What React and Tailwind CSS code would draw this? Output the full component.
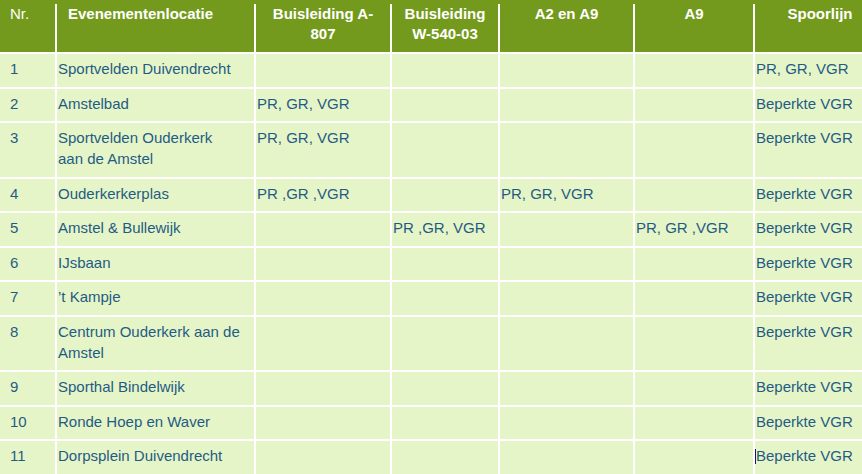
import React from "react";

const rows = [
  ["1", "Sportvelden Duivendrecht", "", "", "", "", "PR, GR, VGR"],
  ["2", "Amstelbad", "PR, GR, VGR", "", "", "", "Beperkte VGR"],
  ["3", ["Sportvelden Ouderkerk", "aan de Amstel"], "PR, GR, VGR", "", "", "", "Beperkte VGR"],
  ["4", "Ouderkerkerplas", "PR ,GR ,VGR", "", "PR, GR, VGR", "", "Beperkte VGR"],
  ["5", "Amstel & Bullewijk", "", "PR ,GR, VGR", "", "PR, GR ,VGR", "Beperkte VGR"],
  ["6", "IJsbaan", "", "", "", "", "Beperkte VGR"],
  ["7", "\u2019t Kampje", "", "", "", "", "Beperkte VGR"],
  ["8", ["Centrum Ouderkerk aan de", "Amstel"], "", "", "", "", "Beperkte VGR"],
  ["9", "Sporthal Bindelwijk", "", "", "", "", "Beperkte VGR"],
  ["10", "Ronde Hoep en Waver", "", "", "", "", "Beperkte VGR"],
  ["11", "Dorpsplein Duivendrecht", "", "", "", "", "Beperkte VGR"],
];

function Cell({ value, first, cursor }) {
  const content = Array.isArray(value) ? (
    <>
      {value[0]}
      <br />
      {value[1]}
    </>
  ) : (
    value
  );
  return (
    <div
      className={
        "bg-[#e6f5c7] text-[#1f5c85] pt-[4px] pb-[7.5px] leading-[21px] whitespace-nowrap " +
        (first ? "pl-[10px]" : "pl-[1px]")
      }
    >
      {cursor ? (
        <span className="relative">
          <span className="absolute left-[-1px] top-[2px] w-[1px] h-[15px] bg-[#1a1466]" />
          {content}
        </span>
      ) : (
        content
      )}
    </div>
  );
}

export default function App() {
  const cols = "grid grid-cols-[55px_197px_134px_106px_133px_118px_130px] gap-x-[2px] w-max";
  return (
    <div
      className="w-[862px] h-[474px] overflow-hidden bg-white text-[15px]"
      style={{ fontFamily: '"Liberation Sans", Arial, sans-serif' }}
    >
      <div className="bg-[#739a1c] pt-[4px]">
        <div className={cols + " bg-white"}>
          <div className="bg-[#739a1c] h-[48px] text-white leading-[20px] pl-[10px]">Nr.</div>
          <div className="bg-[#739a1c] h-[48px] text-white font-bold leading-[20px] pl-[11px]">
            Evenementenlocatie
          </div>
          <div className="bg-[#739a1c] h-[48px] text-white font-bold leading-[20px] text-center">
            Buisleiding A-
            <br />
            807
          </div>
          <div className="bg-[#739a1c] h-[48px] text-white font-bold leading-[20px] text-center">
            Buisleiding
            <br />
            W-540-03
          </div>
          <div className="bg-[#739a1c] h-[48px] text-white font-bold leading-[20px] text-center">
            A2 en A9
          </div>
          <div className="bg-[#739a1c] h-[48px] text-white font-bold leading-[20px] text-center">
            A9
          </div>
          <div className="bg-[#739a1c] h-[48px] text-white font-bold leading-[20px] text-center">
            Spoorlijn
          </div>
        </div>
      </div>
      <div className={cols + " gap-y-[2px] bg-white pt-[2px]"}>
        {rows.map((r, i) =>
          r.map((v, j) => (
            <Cell key={i + "-" + j} value={v} first={j === 0} cursor={i === 10 && j === 6} />
          ))
        )}
      </div>
    </div>
  );
}
